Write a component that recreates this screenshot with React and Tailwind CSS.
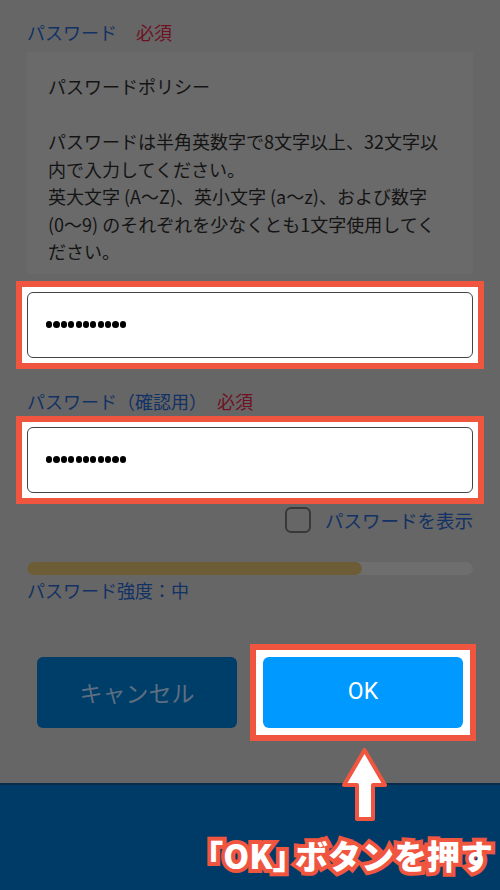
import React, { useState } from "react";

const font = "font-['Noto_Sans_CJK_JP','Noto_Sans',sans-serif]";

function Dots({ count = 11 }) {
  return (
    <div className="flex items-center gap-[1.2px]">
      {[...Array(count)].map((_, i) => (
        <span key={i} className="block w-[6.2px] h-[6.2px] rounded-full bg-black" />
      ))}
    </div>
  );
}

function HighlightInput() {
  return (
    <div className="-mx-[11px] border-[6px] border-[#f0553f] bg-white p-[5px]">
      <div className="h-[66px] rounded-[6px] border border-[#444] bg-white pl-[18px] flex items-center">
        <Dots />
      </div>
    </div>
  );
}

export default function App() {
  const [show, setShow] = useState(false);

  return (
    <div className={`relative w-full min-h-[890px] bg-[#666666] flex flex-col ${font}`}>
      {/* --- FORM --- */}
      <div className="px-[27px]">
        <div className="mt-[20px] h-[24px] leading-[24px] text-[18px] text-[#123164]">
          パスワード<span className="ml-[19px] text-[#6f1122]">必須</span>
        </div>

        {/* Policy */}
        <div className="mt-[8px] bg-[#6a6a6a] pl-[21px] pt-[21px] pb-[8px] text-[18px] leading-[27.5px] text-[#141414] whitespace-nowrap">
          <p>パスワードポリシー</p>
          <p className="mt-[27.5px]">
            パスワードは半角英数字で8文字以上、32文字以
            <br />
            内で入力してください。
            <br />
            英大文字 (A〜Z)、英小文字 (a〜z)、および数字
            <br />
            (0〜9) のそれぞれを少なくとも1文字使用してく
            <br />
            ださい。
          </p>
        </div>

        <div className="mt-[7px]">
          <HighlightInput />
        </div>

        <div className="mt-[20px] h-[24px] leading-[24px] text-[18px] text-[#123164]">
          パスワード（確認用）<span className="ml-[10px] text-[#6f1122]">必須</span>
        </div>

        <div className="mt-[3px]">
          <HighlightInput />
        </div>

        {/* Show password */}
        <div className="mt-[3px] flex items-center justify-end gap-[14px]">
          <button
            onClick={() => setShow(!show)}
            className="w-[26px] h-[26px] rounded-[6px] border-2 border-[#383838]"
          />
          <span className="text-[18.5px] leading-[24px] text-[#123164]">パスワードを表示</span>
        </div>

        {/* Strength */}
        <div className="mt-[29px] h-[13px] rounded-full bg-[#6e6e6e] overflow-hidden">
          <div className="h-full w-[75%] rounded-full bg-[#6c5d37]" />
        </div>
        <div className="mt-[3px] h-[24px] leading-[24px] text-[18px] text-[#123164]">
          パスワード強度：中
        </div>

        {/* Buttons */}
        <div className="mt-[42px] pl-[10px] flex items-center gap-[13px]">
          <button className="shrink-0 w-[200px] h-[71px] rounded-[6px] bg-[#003e6a] text-[23px] text-[#5c6e80]">
            キャンセル
          </button>
          <div className="shrink-0 border-[6px] border-[#f0553f] bg-white p-[7px]">
            <button className="block w-[200px] h-[71px] rounded-[6px] bg-[#0099ff] text-[23px] text-white font-['Roboto','Noto_Sans',sans-serif]">
              OK
            </button>
          </div>
        </div>
      </div>

      {/* --- FOOTER BAR --- */}
      <div className="mt-[42px] flex-1 border-t-2 border-[#0b2b4a] bg-[#003b68] pt-[47px] pr-[7px] text-right">
        <span className="text-[33px] leading-[46px] font-black text-white [font-feature-settings:'halt'] [-webkit-text-stroke:8px_#f0553f] [paint-order:stroke_fill]">
          <span className="mr-[6px]">「OK」</span>ボタンを押す
        </span>
      </div>

      {/* Arrow */}
      <svg
        className="absolute left-[340px] top-[744px]"
        width="50"
        height="80"
        viewBox="0 0 50 80"
      >
        <path
          d="M24.5 6 L45 41 L33 41 L33 75 L17 75 L17 41 L4 41 Z"
          fill="#fff"
          stroke="#f0553f"
          strokeWidth="4"
          strokeLinejoin="round"
        />
      </svg>
    </div>
  );
}
